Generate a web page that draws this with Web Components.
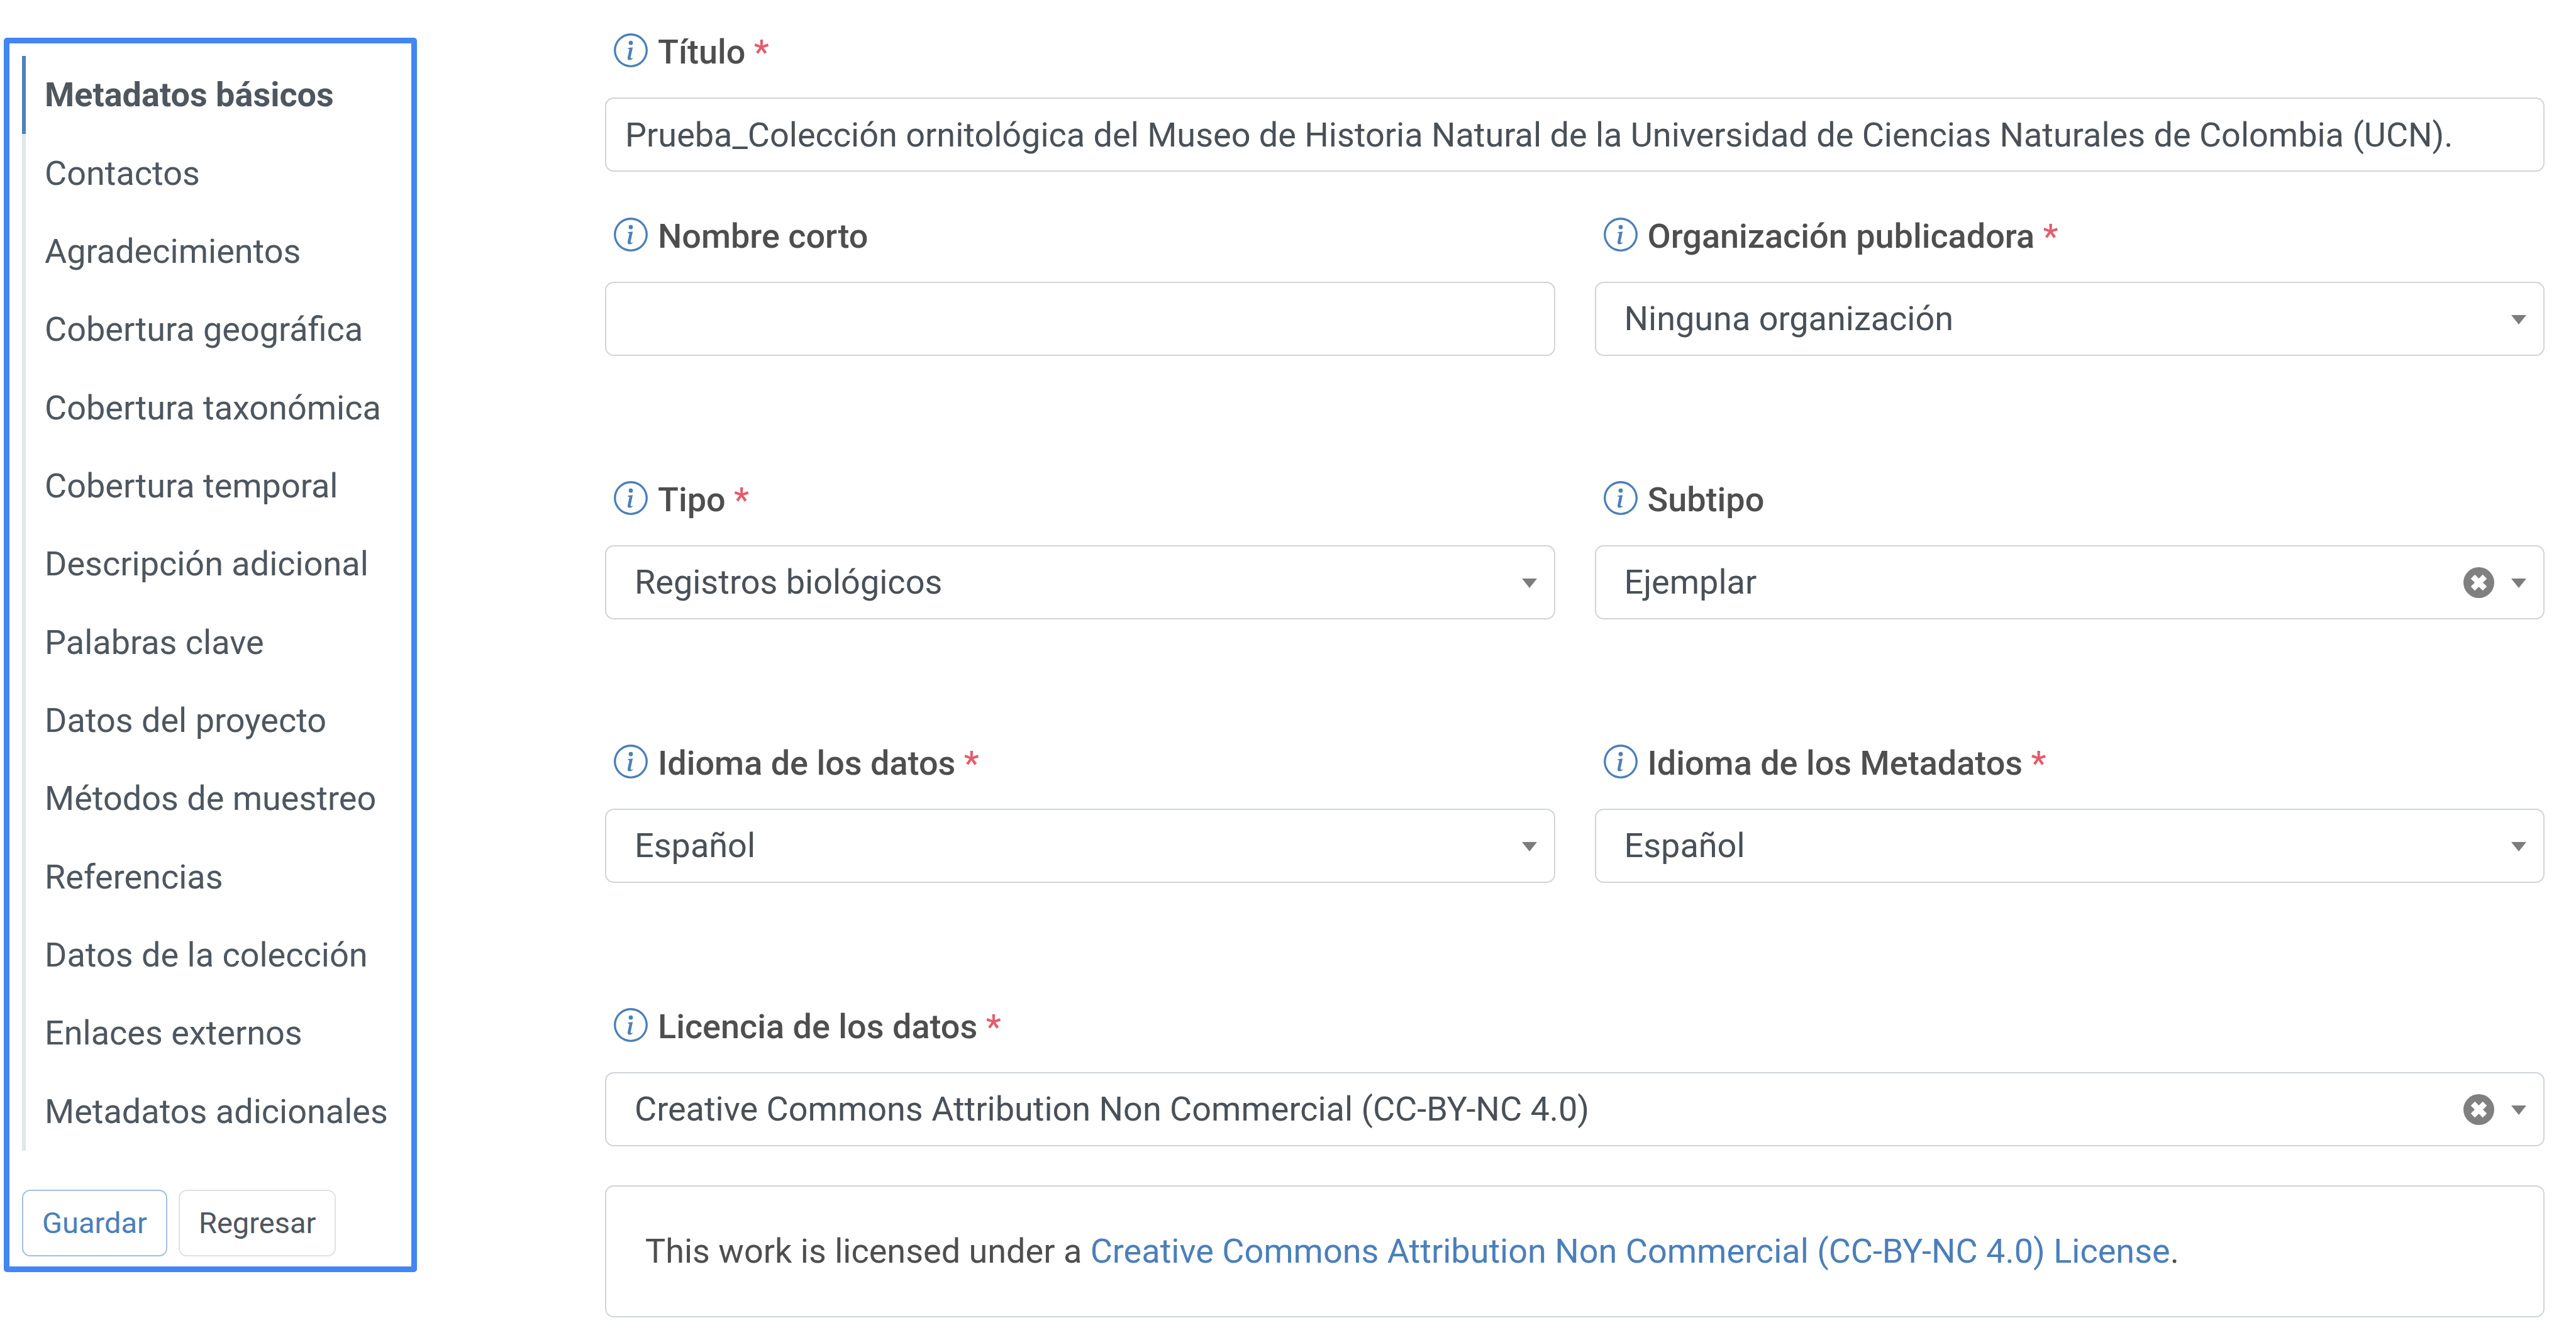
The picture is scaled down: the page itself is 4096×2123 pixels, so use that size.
<!DOCTYPE html>
<html lang="es">
<head>
<meta charset="utf-8">
<meta name="viewport" content="width=device-width, initial-scale=1">
<title>Metadatos básicos</title>
<style>
  :root {
    --text: #4e4e4e;
    --control-text: #495057;
    --nav-text: #4e565f;
    --primary: #4b7fba;
    --danger: #e35d6c;
    --line: #d0d4da;
  }
  body {
    margin: 0;
    background: #fff;
    color: var(--text);
    font: 400 54px/60px Roboto, "Liberation Sans", sans-serif;
  }
</style>
</head>
<body>
<metadata-page>
  <section-nav slot="nav">
    <nav-item current>Metadatos básicos</nav-item>
    <nav-item>Contactos</nav-item>
    <nav-item>Agradecimientos</nav-item>
    <nav-item>Cobertura geográfica</nav-item>
    <nav-item>Cobertura taxonómica</nav-item>
    <nav-item>Cobertura temporal</nav-item>
    <nav-item>Descripción adicional</nav-item>
    <nav-item>Palabras clave</nav-item>
    <nav-item>Datos del proyecto</nav-item>
    <nav-item>Métodos de muestreo</nav-item>
    <nav-item>Referencias</nav-item>
    <nav-item>Datos de la colección</nav-item>
    <nav-item>Enlaces externos</nav-item>
    <nav-item>Metadatos adicionales</nav-item>
    <action-button slot="actions" primary>Guardar</action-button>
    <action-button slot="actions">Regresar</action-button>
  </section-nav>

  <form-row tight>
    <text-field label="Título" required value="Prueba_Colección ornitológica del Museo de Historia Natural de la Universidad de Ciencias Naturales de Colombia (UCN)."></text-field>
  </form-row>
  <form-row>
    <text-field label="Nombre corto"></text-field>
    <select-field label="Organización publicadora" required value="Ninguna organización"></select-field>
  </form-row>
  <form-row>
    <select-field label="Tipo" required value="Registros biológicos"></select-field>
    <select-field label="Subtipo" clearable value="Ejemplar"></select-field>
  </form-row>
  <form-row>
    <select-field label="Idioma de los datos" required value="Español"></select-field>
    <select-field label="Idioma de los Metadatos" required value="Español"></select-field>
  </form-row>
  <form-row last>
    <select-field label="Licencia de los datos" required clearable value="Creative Commons Attribution Non Commercial (CC-BY-NC 4.0)"></select-field>
  </form-row>
  <license-panel>This work is licensed under a <license-link>Creative Commons Attribution Non Commercial (CC-BY-NC 4.0) License</license-link>.</license-panel>
</metadata-page>

<script>
class BaseElement extends HTMLElement {
  connectedCallback() {
    if (this.shadowRoot) return;
    this.attachShadow({ mode: 'open' }).innerHTML = this.render();
    this.ready();
  }
  render() { return '<slot></slot>'; }
  ready() {}
}

customElements.define('metadata-page', class extends BaseElement {
  render() {
    return `
      <style>
        :host { display: flex; align-items: flex-start; gap: 299px; padding: 0 50px 0 6px; }
        aside { flex: none; width: 657px; padding-top: 60px; }
        main { flex: 1; min-width: 0; padding: 53px 0 30px; }
      </style>
      <aside><slot name="nav"></slot></aside>
      <main><slot></slot></main>`;
  }
});

customElements.define('section-nav', class extends BaseElement {
  render() {
    return `
      <style>
        :host { display: block; box-sizing: border-box; border: 9px solid #4285f4; border-radius: 5px; padding: 20px 20px 16px; }
        nav { display: grid; grid-auto-rows: 1fr; min-height: 1741px; }
        .actions { display: flex; gap: 18px; margin-top: 62px; }
      </style>
      <nav><slot></slot></nav>
      <div class="actions"><slot name="actions"></slot></div>`;
  }
});

customElements.define('nav-item', class extends BaseElement {
  render() {
    return `
      <style>
        :host { display: flex; align-items: center; border-left: 6px solid #e2e6e8; padding-left: 30px; }
        :host([current]) { border-left-color: #4e81b8; font-weight: 700; }
        a { color: var(--nav-text); text-decoration: none; white-space: nowrap; }
      </style>
      <a href="#"><slot></slot></a>`;
  }
});

customElements.define('action-button', class extends BaseElement {
  render() {
    return `
      <style>
        :host { display: block; }
        button {
          display: block; margin: 0; padding: 21px 30px; border: 2px solid #dee2e6; border-radius: 13px;
          background: #fff; color: var(--nav-text); font: inherit; font-size: 47px; cursor: pointer;
        }
        :host([primary]) button { border-color: #a5bfdf; color: var(--primary); }
      </style>
      <button type="button"><slot></slot></button>`;
  }
});

customElements.define('form-row', class extends BaseElement {
  render() {
    return `
      <style>
        :host { display: grid; grid-auto-flow: column; grid-auto-columns: minmax(0, 1fr); gap: 63px; margin-bottom: 199px; }
        :host([tight]) { margin-bottom: 73px; }
        :host([last]) { margin-bottom: 62px; }
      </style>
      <slot></slot>`;
  }
});

customElements.define('info-icon', class extends BaseElement {
  render() {
    return `
      <style>
        :host { display: block; flex: none; color: var(--primary); }
        svg { display: block; width: 54px; height: 54px; }
      </style>
      <svg viewBox="0 0 16 16" fill="currentColor" aria-hidden="true">
        <path d="M8 15A7 7 0 1 1 8 1a7 7 0 0 1 0 14m0 1A8 8 0 1 0 8 0a8 8 0 0 0 0 16"/>
        <path d="m8.930 6.588-2.290.287-.082.380.450.083c.294.070.352.176.288.469l-.738 3.468c-.194.897.105 1.319.808 1.319.545 0 1.178-.252 1.465-.598l.088-.416c-.200.176-.492.246-.686.246-.275 0-.375-.193-.304-.533zM9 4.500a1 1 0 1 1-2 0 1 1 0 0 1 2 0"/>
      </svg>`;
  }
});

/* Shared label row and control frame for every kind of field. */
class FieldElement extends BaseElement {
  render() {
    const star = this.hasAttribute('required') ? ' <span class="star">*</span>' : '';
    return `
      <style>
        :host { display: block; min-width: 0; }
        .head { display: flex; align-items: flex-start; gap: 16px; padding-left: 14px; margin-bottom: 42px; }
        label { font-weight: 500; color: var(--text); white-space: nowrap; }
        .star { color: var(--danger); }
        .control { display: grid; align-items: center; }
        .control > * { grid-area: 1 / 1; }
        input, select {
          appearance: none; box-sizing: border-box; width: 100%; height: 118px; margin: 0;
          border: 2px solid var(--line); border-radius: 14px; background: #fff;
          color: var(--control-text); font: inherit; outline-offset: 2px;
        }
        input { padding: 0 30px; }
        select { padding: 0 140px 0 45px; }
        .tools { display: flex; align-items: center; justify-self: end; gap: 27px; padding-right: 29px; pointer-events: none; }
        .tools svg { display: block; }
        button { padding: 0; border: 0; background: none; pointer-events: auto; cursor: pointer; }
      </style>
      <div class="head"><info-icon></info-icon><label for="field">${this.getAttribute('label')}${star}</label></div>
      <div class="control">${this.control()}</div>`;
  }
}

customElements.define('text-field', class extends FieldElement {
  control() { return '<input id="field" type="text">'; }
  ready() { this.shadowRoot.querySelector('input').value = this.getAttribute('value') || ''; }
});

customElements.define('select-field', class extends FieldElement {
  control() {
    const clear = this.hasAttribute('clearable') ? `
      <button type="button" aria-label="Borrar">
        <svg width="49" height="49" viewBox="0 0 16 16" aria-hidden="true">
          <circle cx="8" cy="8" r="8" fill="#808080"/>
          <path d="M4.900 4.900l6.200 6.200M11.100 4.900l-6.200 6.200" stroke="#fff" stroke-width="3"/>
        </svg>
      </button>` : '';
    return `
      <select id="field"><option>${this.getAttribute('value')}</option></select>
      <div class="tools">${clear}
        <svg width="24" height="18" viewBox="0 0 24 18" aria-hidden="true"><path d="M0 3h24L12 18z" fill="#7c7c7c"/></svg>
      </div>`;
  }
});

customElements.define('license-panel', class extends BaseElement {
  render() {
    return `
      <style>
        :host { display: block; border: 2px solid var(--line); border-radius: 14px; padding: 73px 62px; }
        p { margin: 0; }
      </style>
      <p><slot></slot></p>`;
  }
});

customElements.define('license-link', class extends BaseElement {
  render() {
    return `
      <style>
        :host { display: inline; }
        a { color: var(--primary); text-decoration: none; }
      </style>
      <a href="#"><slot></slot></a>`;
  }
});
</script>
</body>
</html>
